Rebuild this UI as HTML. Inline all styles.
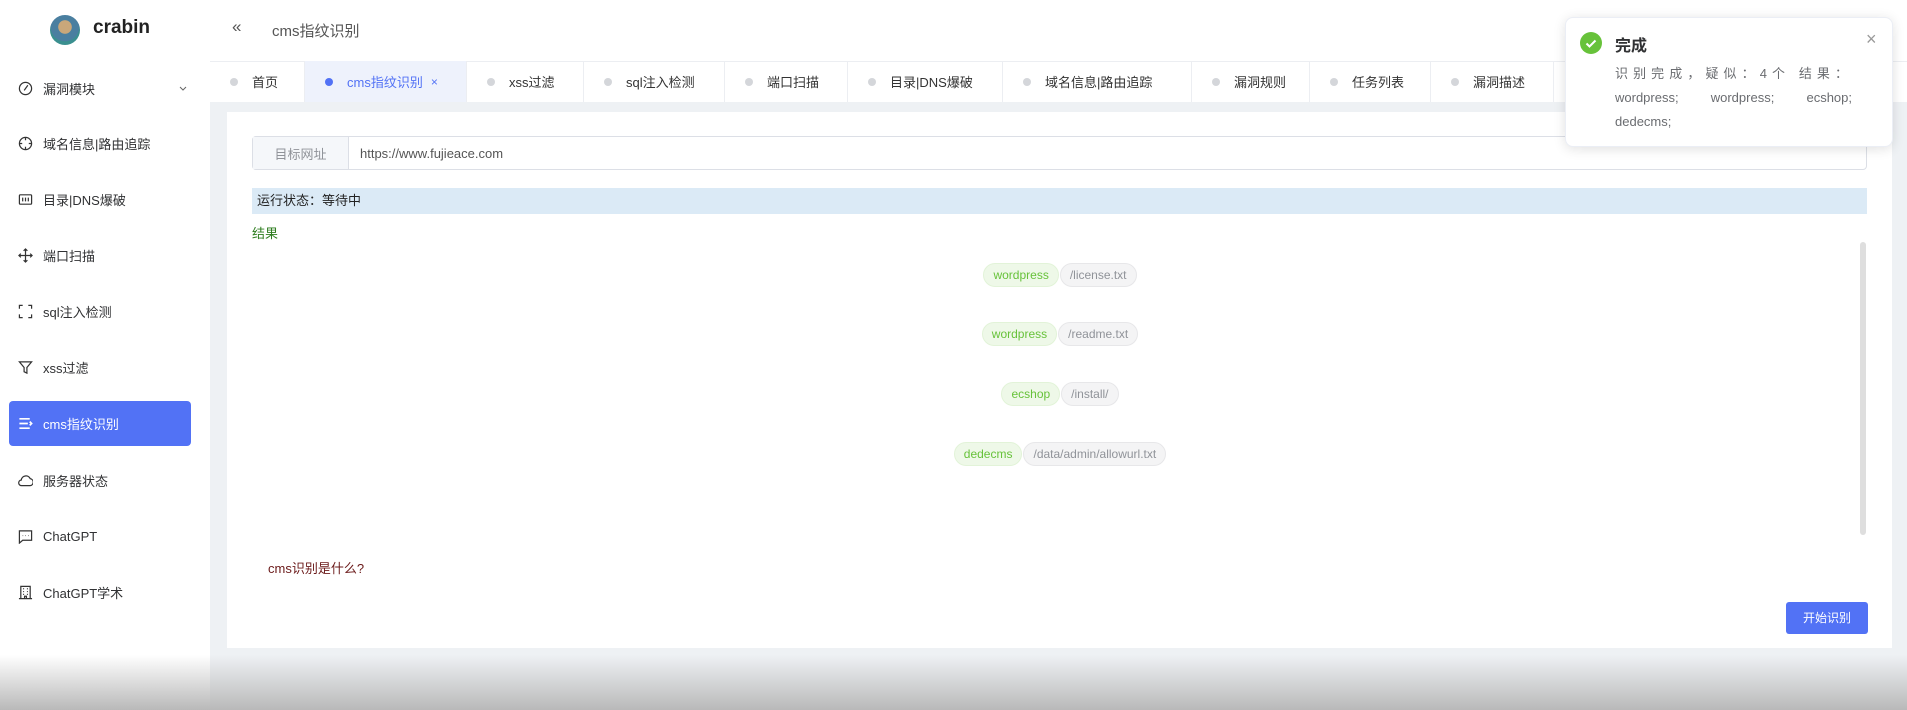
<!DOCTYPE html>
<html><head><meta charset="utf-8"><style>
*{box-sizing:border-box;margin:0;padding:0}
body{width:1907px;height:710px;overflow:hidden;background:#fff;font-family:"Liberation Sans","Noto Sans CJK SC",sans-serif;color:#303133;position:relative}
.abs{position:absolute}
.item{position:absolute;left:0;width:210px;height:44px;display:flex;align-items:center;font-size:13px;color:#303133}
.item svg{position:absolute;left:18px;width:15px;height:15px}
.item span{position:absolute;left:43px}
.active{left:9px;width:182px;background:#5272f5;border-radius:4px;color:#fff;height:45px}
.active svg{left:9px}.active span{left:34px}
.tab{position:absolute;top:61px;height:41px;border-right:1px solid #eceef2;display:flex;align-items:center;font-size:13px;color:#333}
.tab i{display:inline-block;width:8px;height:8px;border-radius:50%;background:#d4d6da;margin:0 14px 0 20px}
.tag{display:inline-block;height:24px;line-height:22px;border-radius:12px;font-size:12px;padding:0 9px;border:1px solid}
.g{background:#eef8e8;border-color:#e2f3d8;color:#67c23a}
.p{background:#f4f4f5;border-color:#e7e7e9;color:#909399;margin-left:1px}
.row{position:absolute;left:228px;width:1664px;text-align:center;font-size:0}
</style></head><body>
<div class="abs" style="left:50px;top:15px;width:30px;height:30px;border-radius:50%;background:radial-gradient(circle at 50% 40%,#c9a77a 0 28%,#4a7fa0 30% 60%,#3a8f8f 62%)"></div>
<div class="abs" style="left:93px;top:17px;font-size:19px;font-weight:bold;color:#222">crabin</div>
<div class="item" style="top:66px"><svg viewBox="0 0 16 16" fill="none" stroke="#333" stroke-width="1.3"><circle cx="8" cy="8" r="6.5"/><path d="M10.5 4.5L7 9.5 6.5 10"/></svg><span>漏洞模块</span><svg style="left:178px;width:10px" viewBox="0 0 10 10" fill="none" stroke="#666"><path d="M2 3.5l3 3 3-3"/></svg></div>
<div class="item" style="top:121px"><svg viewBox="0 0 16 16" fill="none" stroke="#333" stroke-width="1.3"><circle cx="8" cy="8" r="6.5"/><path d="M8 1.5v3M8 11.5v3M1.5 8h3M11.5 8h3"/></svg><span>域名信息|路由追踪</span></div>
<div class="item" style="top:177px"><svg viewBox="0 0 16 16" fill="none" stroke="#333" stroke-width="1.3"><rect x="1.5" y="3" width="13" height="10" rx="1"/><path d="M5 6v4M8 6v4M11 6v4"/></svg><span>目录|DNS爆破</span></div>
<div class="item" style="top:233px"><svg viewBox="0 0 16 16" fill="none" stroke="#333" stroke-width="1.3"><path d="M8 1v14M1 8h14M6 3l2-2 2 2M6 13l2 2 2-2M3 6L1 8l2 2M13 6l2 2-2 2"/></svg><span>端口扫描</span></div>
<div class="item" style="top:289px"><svg viewBox="0 0 16 16" fill="none" stroke="#333" stroke-width="1.3"><path d="M1.5 5V1.5H5M11 1.5h3.5V5M14.5 11v3.5H11M5 14.5H1.5V11"/></svg><span>sql注入检测</span></div>
<div class="item" style="top:345px"><svg viewBox="0 0 16 16" fill="none" stroke="#333" stroke-width="1.3"><path d="M1.5 2h13L9.5 8v6l-3-1.5V8z"/></svg><span>xss过滤</span></div>
<div class="item active" style="top:401px"><svg viewBox="0 0 16 16" fill="none" stroke="#fff" stroke-width="1.8"><path d="M1.5 3h11M1.5 8h9M1.5 13h11M12.5 6l2 2-2 2"/></svg><span>cms指纹识别</span></div>
<div class="item" style="top:458px"><svg viewBox="0 0 16 16" fill="none" stroke="#333" stroke-width="1.3"><path d="M4 13.5a3 3 0 0 1-.5-6A5 5 0 0 1 13 6a3.8 3.8 0 0 1 0 7.5z"/></svg><span>服务器状态</span></div>
<div class="item" style="top:514px"><svg viewBox="0 0 16 16" fill="none" stroke="#333" stroke-width="1.3"><path d="M1.5 2h13v10H5l-3.5 3z"/><path d="M5 7h.5M8 7h.5M11 7h.5"/></svg><span>ChatGPT</span></div>
<div class="item" style="top:570px"><svg viewBox="0 0 16 16" fill="none" stroke="#333" stroke-width="1.3"><path d="M3 1.5h10v13H3zM1 14.5h14M5.5 4h1M9.5 4h1M5.5 7h1M9.5 7h1M5.5 10h1M9.5 10h1M7 14.5v-2.5h2v2.5"/></svg><span>ChatGPT学术</span></div>
<div class="abs" style="left:0;top:655px;width:210px;height:55px;background:linear-gradient(#fff,#b9b9b9)"></div>
<div class="abs" style="left:232px;top:17px;font-size:17px;color:#555">«</div>
<div class="abs" style="left:272px;top:20px;font-size:15px;color:#555">cms指纹识别</div>
<div class="abs" style="left:210px;top:102px;width:1697px;height:608px;background:#eef1f4"></div>
<div class="abs" style="left:210px;top:61px;width:1697px;height:1px;background:#eceef2"></div>
<div class="tab" style="left:210px;width:95px"><i></i>首页</div>
<div class="tab" style="left:305px;width:162px;background:#eef2fc;color:#5272f5"><i style="background:#5272f5"></i>cms指纹识别<span style="margin-left:8px;font-size:12px">×</span></div>
<div class="tab" style="left:467px;width:117px"><i></i>xss过滤</div>
<div class="tab" style="left:584px;width:141px"><i></i>sql注入检测</div>
<div class="tab" style="left:725px;width:123px"><i></i>端口扫描</div>
<div class="tab" style="left:848px;width:155px"><i></i>目录|DNS爆破</div>
<div class="tab" style="left:1003px;width:189px"><i></i>域名信息|路由追踪</div>
<div class="tab" style="left:1192px;width:118px"><i></i>漏洞规则</div>
<div class="tab" style="left:1310px;width:121px"><i></i>任务列表</div>
<div class="tab" style="left:1431px;width:123px"><i></i>漏洞描述</div>
<div class="abs" style="left:227px;top:112px;width:1665px;height:536px;background:#fff"></div>
<div class="abs" style="left:252px;top:136px;width:1615px;height:34px;border:1px solid #dcdfe6;border-radius:4px;display:flex;align-items:center;font-size:13px">
 <div style="width:96px;height:32px;background:#f5f7fa;border-right:1px solid #dcdfe6;color:#909399;display:flex;align-items:center;justify-content:center">目标网址</div>
 <div style="padding-left:11px;color:#555">https://www.fujieace.com</div>
</div>
<div class="abs" style="left:252px;top:188px;width:1615px;height:26px;background:#dbeaf6;font-size:13px;line-height:26px;padding-left:5px;color:#222">运行状态：等待中</div>
<div class="abs" style="left:252px;top:223px;font-size:13px;color:#2e7d1f">结果</div>
<div class="abs" style="left:1860px;top:242px;width:6px;height:293px;border-radius:3px;background:#dedede"></div>
<div class="row" style="top:263px"><span class="tag g">wordpress</span><span class="tag p">/license.txt</span></div>
<div class="row" style="top:322px"><span class="tag g">wordpress</span><span class="tag p">/readme.txt</span></div>
<div class="row" style="top:382px"><span class="tag g">ecshop</span><span class="tag p">/install/</span></div>
<div class="row" style="top:442px"><span class="tag g">dedecms</span><span class="tag p">/data/admin/allowurl.txt</span></div>
<div class="abs" style="left:268px;top:558px;font-size:13px;color:#6b1a1a">cms识别是什么?</div>
<div class="abs" style="left:1786px;top:602px;width:82px;height:32px;background:#5272f5;border-radius:3px;color:#fff;font-size:12px;line-height:32px;text-align:center">开始识别</div>
<div class="abs" style="left:210px;top:655px;width:1697px;height:55px;background:linear-gradient(#eef1f4,#b9b9b9)"></div>
<div class="abs" style="left:1565px;top:17px;width:328px;height:130px;background:#fff;border-radius:8px;box-shadow:0 2px 12px rgba(0,0,0,.12);border:1px solid #ebeef5">
 <div class="abs" style="left:14px;top:14px;width:22px;height:22px;border-radius:50%;background:#67c23a"><svg width="22" height="22" viewBox="0 0 22 22" fill="none" stroke="#fff" stroke-width="2"><path d="M6.5 11.5l3 3 6-6"/></svg></div>
 <div class="abs" style="left:49px;top:14px;font-size:16px;font-weight:bold;color:#303133">完成</div>
 <div class="abs" style="left:300px;top:11px;font-size:18px;color:#999">×</div>
 <div class="abs" style="left:49px;top:44px;width:237px;font-size:13px;line-height:24px;color:#6a6c70;text-align:justify;text-align-last:justify"><span style="letter-spacing:4px">识别完成，疑似：4个 结果：</span> wordpress; wordpress; ecshop;</div>
 <div class="abs" style="left:49px;top:92px;font-size:13px;line-height:24px;color:#6a6c70">dedecms;</div>
</div>
</body></html>
